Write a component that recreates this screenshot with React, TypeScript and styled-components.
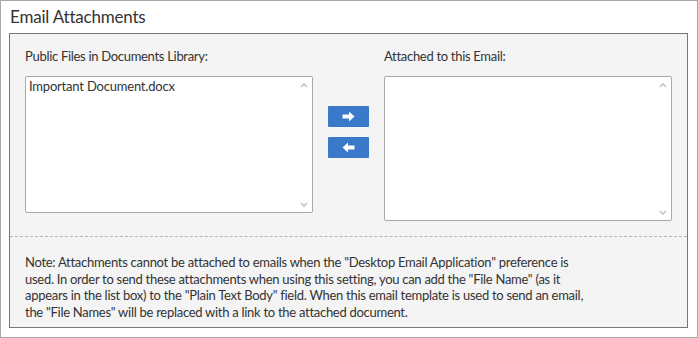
import React from 'react';
import styled, { createGlobalStyle } from 'styled-components';

const GlobalStyle = createGlobalStyle`
  html, body {
    margin: 0;
    padding: 0;
    background: #fff;
  }
  body {
    font-family: Lato, "Open Sans", sans-serif;
    color: #333;
  }
`;

const Chevron = ({ up }: { up?: boolean }) => (
  <svg width="8" height="6" viewBox="0 0 8 6">
    <path
      d={up ? 'M1 5 L4 2 L7 5' : 'M1 1 L4 4 L7 1'}
      fill="none"
      stroke="#c4c4c4"
      strokeWidth="1.6"
    />
  </svg>
);

const ArrowIcon = ({ left }: { left?: boolean }) => (
  <svg width="13" height="11" viewBox="0 0 13 11">
    <path
      d="M0.5 3.5 H7 V0.5 L12.5 5.5 L7 10.5 V7.5 H0.5 Z"
      fill="#fff"
      transform={left ? 'translate(13 0) scale(-1 1)' : undefined}
    />
  </svg>
);

const noteLines = [
  'Note: Attachments cannot be attached to emails when the "Desktop Email Application" preference is',
  'used. In order to send these attachments when using this setting, you can add the "File Name" (as it',
  'appears in the list box) to the "Plain Text Body" field. When this email template is used to send an email,',
  'the "File Names" will be replaced with a link to the attached document.',
];

const EmailAttachments = () => {
  const files = ['Important Document.docx'];
  const attached: string[] = [];

  return (
    <Frame>
      <Title>Email Attachments</Title>
      <Panel>
        <Picker>
          <Column>
            <Label>Public Files in Documents Library:</Label>
            <ListBox height={137}>
              <Items>
                {files.map((f) => (
                  <Item key={f}>{f}</Item>
                ))}
              </Items>
              <ScrollTrack>
                <Chevron up />
                <Chevron />
              </ScrollTrack>
            </ListBox>
          </Column>
          <Buttons>
            <MoveButton aria-label="Attach">
              <ArrowIcon />
            </MoveButton>
            <MoveButton aria-label="Remove">
              <ArrowIcon left />
            </MoveButton>
          </Buttons>
          <Column>
            <Label>Attached to this Email:</Label>
            <ListBox height={145}>
              <Items>
                {attached.map((f) => (
                  <Item key={f}>{f}</Item>
                ))}
              </Items>
              <ScrollTrack>
                <Chevron up />
                <Chevron />
              </ScrollTrack>
            </ListBox>
          </Column>
        </Picker>
        <Note>
          {noteLines.map((l) => (
            <NoteLine key={l}>{l}</NoteLine>
          ))}
        </Note>
      </Panel>
    </Frame>
  );
};

const App = () => (
  <>
    <GlobalStyle />
    <EmailAttachments />
  </>
);

const Frame = styled.div`
  box-sizing: border-box;
  width: 698px;
  height: 338px;
  border: 1px solid #a9a9a9;
  padding: 0 9px 9px 8px;
  display: flex;
  flex-direction: column;
`;

const Title = styled.h2`
  margin: 0;
  height: 32px;
  line-height: 32px;
  font-size: 17px;
  font-weight: 400;
  letter-spacing: -0.2px;
  color: #333;
  padding-left: 1px;
`;

const Panel = styled.div`
  flex: 1;
  background: #f4f4f4;
  border: 1px solid #777;
  display: flex;
  flex-direction: column;
`;

const Picker = styled.div`
  display: flex;
  align-items: flex-start;
  padding: 13px 15px 15px 15px;
  border-bottom: 1px dashed #b5b5b5;
`;

const Column = styled.div`
  display: flex;
  flex-direction: column;
  width: 288px;
`;

const Label = styled.div`
  font-size: 13px;
  line-height: 18px;
  letter-spacing: -0.3px;
  margin-bottom: 11px;
`;

const ListBox = styled.div<{ height: number }>`
  box-sizing: border-box;
  height: ${(p) => p.height}px;
  background: #fff;
  border: 1px solid #a9a9a9;
  border-radius: 2px;
  display: flex;
`;

const Items = styled.div`
  flex: 1;
  padding: 1px 3px;
`;

const Item = styled.div`
  font-size: 13px;
  line-height: 16px;
  letter-spacing: -0.2px;
`;

const ScrollTrack = styled.div`
  width: 16px;
  display: flex;
  flex-direction: column;
  justify-content: space-between;
  align-items: center;
  padding: 5px 0 4px;
`;

const Buttons = styled.div`
  display: flex;
  flex-direction: column;
  gap: 10px;
  margin: 59px 15px 0 15px;
`;

const MoveButton = styled.button`
  width: 41px;
  height: 21px;
  border: none;
  border-radius: 1px;
  background: #3a78c9;
  padding: 0;
  display: flex;
  align-items: center;
  justify-content: center;
  cursor: pointer;
`;

const Note = styled.div`
  padding: 17px 15px 0 15px;
  font-size: 13px;
  line-height: 16.7px;
  letter-spacing: -0.28px;
  color: #333;
`;

const NoteLine = styled.div`
  white-space: nowrap;
`;

export default App;
